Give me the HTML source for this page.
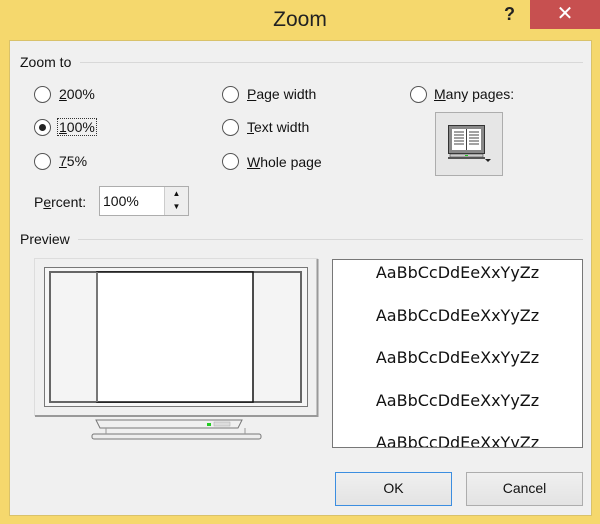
<!DOCTYPE html>
<html><head><meta charset="utf-8"><style>
*{margin:0;padding:0;box-sizing:border-box}
body{width:600px;height:524px;background:#f5d86d;font-family:"Liberation Sans",sans-serif;font-size:14px;color:#111;position:relative;overflow:hidden}
.a{position:absolute}
.body{left:9px;top:40px;width:583px;height:476px;background:#f0f0f0;border:1px solid #d9c26a}
.title{left:0;top:8px;width:600px;text-align:center;font-size:21px;color:#222}
.close{left:530px;top:0;width:70px;height:29px;background:#c75050;color:#fff;font-size:20px;text-align:center;line-height:28px}
.help{left:504px;top:4px;font-size:18px;font-weight:bold;color:#222}
.radio{width:17px;height:17px;border-radius:50%;border:1px solid #555;background:#fff}
.dot{position:absolute;left:4px;top:4px;width:7px;height:7px;border-radius:50%;background:#222}
.lbl{font-size:14px}
u{text-decoration:underline}
.line{height:1px;background:#d8d8d8}
.btn{border:1px solid #adadad;background:linear-gradient(#f0f0f0,#e3e3e3);text-align:center;line-height:31px;font-size:14px}
</style></head><body>
<div class="a body"></div>
<div class="a title">Zoom</div>
<div class="a help">?</div>
<div class="a close">✕</div>

<div class="a lbl" style="left:20px;top:54px">Zoom to</div>
<div class="a line" style="left:80px;top:62px;width:503px"></div>

<div class="a radio" style="left:34px;top:86px"></div><div class="a lbl" style="left:59px;top:86px"><u>2</u>00%</div>
<div class="a radio" style="left:34px;top:119px"><div class="dot"></div></div><div class="a lbl" style="left:57px;top:118px;border:1px dotted #333;padding:0 1px"><u>1</u>00%</div>
<div class="a radio" style="left:34px;top:153px"></div><div class="a lbl" style="left:59px;top:153px"><u>7</u>5%</div>

<div class="a radio" style="left:222px;top:86px"></div><div class="a lbl" style="left:247px;top:86px"><u>P</u>age width</div>
<div class="a radio" style="left:222px;top:119px"></div><div class="a lbl" style="left:247px;top:119px"><u>T</u>ext width</div>
<div class="a radio" style="left:222px;top:153px"></div><div class="a lbl" style="left:247px;top:154px"><u>W</u>hole page</div>

<div class="a radio" style="left:410px;top:86px"></div><div class="a lbl" style="left:434px;top:86px"><u>M</u>any pages:</div>
<div class="a" style="left:435px;top:112px;width:68px;height:64px;border:1px solid #adadad;background:#e6e6e6">
<svg width="68" height="64" style="position:absolute;left:-1px;top:-1px">
<rect x="13.5" y="13.5" width="36" height="28" fill="#888" stroke="#333"/>
<rect x="17" y="17" width="29" height="21" fill="#fff"/>
<path d="M19 20h10M19 23h10M19 26h10M19 29h10M19 32h10M34 20h10M34 23h10M34 26h10M34 29h10M34 32h10M31.5 17v21" stroke="#444"/>
<rect x="15" y="42" width="33" height="3" fill="#ccc" stroke="#444" stroke-width=".6"/>
<rect x="30" y="43" width="3" height="1" fill="#2c2"/>
<rect x="13" y="45" width="37" height="2" fill="#555"/>
<path d="M50 47h6l-3 3z" fill="#222"/>
</svg></div>

<div class="a lbl" style="left:34px;top:194px">P<u>e</u>rcent:</div>
<div class="a" style="left:99px;top:186px;width:90px;height:30px;border:1px solid #adadad;background:#fff"><span class="a" style="left:3px;top:6px">100%</span>
<div class="a" style="left:64px;top:0;width:24px;height:28px;border-left:1px solid #ccc;background:#eee;font-size:8px;text-align:center;line-height:13px">▲<br>▼</div></div>

<div class="a lbl" style="left:20px;top:231px">Preview</div>
<div class="a line" style="left:78px;top:239px;width:505px"></div>

<svg class="a" style="left:34px;top:258px" width="286" height="185">
<rect x="0.5" y="0.5" width="283" height="157" fill="#f0f0f0" stroke="#ddd"/>
<path d="M283.5 1v157H1" stroke="#999" fill="none" stroke-width="2"/>
<rect x="10.5" y="9.5" width="263" height="139" fill="#f6f6f6" stroke="#777"/>
<rect x="16" y="14" width="251" height="130" fill="#f4f4f4" stroke="#666" stroke-width="2"/>
<rect x="63" y="14" width="156" height="130" fill="#fff" stroke="#111" stroke-width="1.5"/>
<path d="M63 14v130" stroke="#777" stroke-width="2"/>
<path d="M62 162h146l-4 8H66z" fill="#f0f0f0" stroke="#777"/>
<rect x="173" y="165" width="4" height="3" fill="#2c2"/>
<rect x="180" y="164" width="16" height="4" fill="#ddd" stroke="#aaa" stroke-width=".5"/>
<rect x="58" y="176" width="169" height="5" rx="2" fill="#eee" stroke="#777"/>
<path d="M72 170v6M211 170v6" stroke="#999"/>
</svg>

<div class="a" style="left:332px;top:259px;width:251px;height:189px;border:1px solid #777;background:#fff;overflow:hidden;font-family:'DejaVu Sans',sans-serif;font-size:16px;text-align:center;color:#111">
<div style="position:absolute;left:0;width:100%;top:-8px;line-height:42.5px">AaBbCcDdEeXxYyZz<br>AaBbCcDdEeXxYyZz<br>AaBbCcDdEeXxYyZz<br>AaBbCcDdEeXxYyZz<br>AaBbCcDdEeXxYyZz</div></div>

<div class="a btn" style="left:335px;top:472px;width:117px;height:34px;border-color:#3c8ee0">OK</div>
<div class="a btn" style="left:466px;top:472px;width:117px;height:34px">Cancel</div>
</body></html>
